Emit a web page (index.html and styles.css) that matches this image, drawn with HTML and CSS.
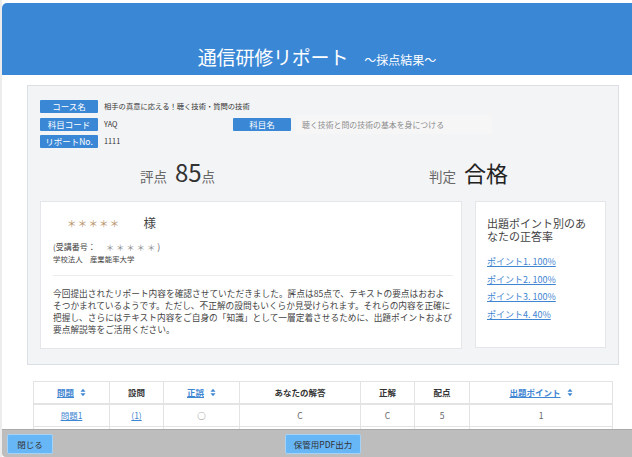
FILE: index.html
```html
<!DOCTYPE html>
<html lang="ja">
<head>
<meta charset="utf-8">
<title>通信研修リポート 採点結果</title>
<link rel="stylesheet" href="styles.css">
</head>
<body>
<div class="page">
  <header class="header">
    <h1 class="title">通信研修リポート<span class="subtitle">～採点結果～</span></h1>
  </header>

  <section class="panel">
    <div class="info">
      <div class="info-row">
        <span class="label">コース名</span>
        <span class="value">相手の真意に応える！聴く技術・質問の技術</span>
      </div>
      <div class="info-row">
        <div class="pair">
          <span class="label">科目コード</span>
          <span class="value">YAQ</span>
        </div>
        <span class="label">科目名</span>
        <span class="value subject-value">聴く技術と問の技術の基本を身につける</span>
      </div>
      <div class="info-row">
        <span class="label">リポートNo.</span>
        <span class="value">1111</span>
      </div>
    </div>

    <div class="scores">
      <div class="score-col score-left">
        <span class="score-label">評点</span>
        <span class="score-num">85</span><span class="score-unit">点</span>
      </div>
      <div class="score-col score-right">
        <span class="score-label">判定</span>
        <span class="score-result">合格</span>
      </div>
    </div>

    <div class="cards">
      <div class="card card-main">
        <div class="name-line"><span class="stars">＊＊＊＊＊</span><span class="sama">様</span></div>
        <div class="number-line"><span>(受講番号：</span><span class="stars-small">＊＊＊＊＊</span><span class="paren">)</span></div>
        <div class="org">学校法人　産業能率大学</div>
        <hr class="divider">
        <p class="comment">今回提出されたリポート内容を確認させていただきました。評点は85点で、テキストの要点はおおよ<br>そつかまれているようです。ただし、不正解の設問もいくらか見受けられます。それらの内容を正確に<br>把握し、さらにはテキスト内容をご自身の「知識」として一層定着させるために、出題ポイントおよび<br>要点解説等をご活用ください。</p>
      </div>
      <div class="card card-side">
        <h2 class="side-title">出題ポイント別のあなたの正答率</h2>
        <ul class="point-list">
          <li><a href="#" class="link">ポイント1. 100%</a></li>
          <li><a href="#" class="link">ポイント2. 100%</a></li>
          <li><a href="#" class="link">ポイント3. 100%</a></li>
          <li><a href="#" class="link">ポイント4. 40%</a></li>
        </ul>
      </div>
    </div>
  </section>

  <table class="results">
    <colgroup>
      <col class="c1"><col class="c2"><col class="c3"><col class="c4"><col class="c5"><col class="c6"><col class="c7">
    </colgroup>
    <thead>
      <tr>
        <th><a href="#" class="link">問題</a><svg class="sort" viewBox="0 0 6 9" width="6" height="9"><polygon points="0.5,3.8 3,0.8 5.5,3.8"/><polygon points="0.5,5.2 3,8.2 5.5,5.2"/></svg></th>
        <th>設問</th>
        <th><a href="#" class="link">正誤</a><svg class="sort" viewBox="0 0 6 9" width="6" height="9"><polygon points="0.5,3.8 3,0.8 5.5,3.8"/><polygon points="0.5,5.2 3,8.2 5.5,5.2"/></svg></th>
        <th>あなたの解答</th>
        <th>正解</th>
        <th>配点</th>
        <th><a href="#" class="link">出題ポイント</a><svg class="sort" viewBox="0 0 6 9" width="6" height="9"><polygon points="0.5,3.8 3,0.8 5.5,3.8"/><polygon points="0.5,5.2 3,8.2 5.5,5.2"/></svg></th>
      </tr>
    </thead>
    <tbody>
      <tr>
        <td><a href="#" class="link">問題1</a></td>
        <td><a href="#" class="link">(1)</a></td>
        <td>○</td>
        <td>C</td>
        <td>C</td>
        <td>5</td>
        <td>1</td>
      </tr>
      <tr>
        <td><a href="#" class="link">問題1</a></td>
        <td><a href="#" class="link">(2)</a></td>
        <td>○</td>
        <td>A</td>
        <td>A</td>
        <td>5</td>
        <td>1</td>
      </tr>
    </tbody>
  </table>
</div>

<footer class="bar">
  <button class="btn">閉じる</button>
  <button class="btn btn-pdf">保管用PDF出力</button>
</footer>
</body>
</html>
```

FILE: styles.css
```css
* { box-sizing: border-box; }

html, body {
  margin: 0;
  padding: 0;
  background: #ffffff;
}

body {
  font-family: "Noto Sans CJK JP", "Noto Sans", sans-serif;
  color: #333;
}

.page {
  border-left: 2px solid #ececec;
  padding-top: 3px;
  padding-bottom: 40px;
  min-height: 457px;
}

.header {
  background: #3a87d6;
  height: 72px;
  border-top-left-radius: 5px;
  padding-top: 42px;
  text-align: center;
}

.title {
  margin: 0;
  font-weight: normal;
  font-size: 19px;
  line-height: 24px;
  color: #ffffff;
  letter-spacing: -0.2px;
}

.subtitle {
  font-size: 12px;
  margin-left: 16px;
  letter-spacing: 0;
}

.panel {
  margin: 10px 13px 0 25px;
  background: #f3f4f6;
  border: 1px solid #dcdfe3;
  padding: 14px 12px 15px 12px;
}

.info {
  display: flex;
  flex-direction: column;
  gap: 4.5px;
}

.info-row {
  display: flex;
  align-items: center;
  height: 13px;
}

.pair {
  display: flex;
  align-items: center;
  width: 193px;
}

.label {
  display: inline-block;
  width: 58px;
  height: 13px;
  line-height: 13px;
  background: #3a87d6;
  color: #ffffff;
  font-size: 8.5px;
  text-align: center;
  border-radius: 1px;
  flex-shrink: 0;
}

.value {
  margin-left: 6px;
  font-size: 7.3px;
  line-height: 13px;
  color: #333;
}

.subject-value {
  margin-left: 5px;
  width: 196px;
  height: 19px;
  line-height: 19px;
  padding-left: 6px;
  background: #f6f6f7;
  color: #8c8c8c;
  font-size: 7.9px;
}

.scores {
  display: flex;
  margin-top: 9px;
  height: 30px;
}

.score-col {
  flex: 1;
  display: flex;
  justify-content: center;
  align-items: baseline;
  height: 30px;
  line-height: 30px;
}

.score-left { padding-right: 10px; }
.score-right { padding-left: 6px; }

.score-label {
  font-size: 13.5px;
  color: #666;
  margin-right: 8px;
}

.score-num {
  font-size: 24px;
  color: #333;
}

.score-unit {
  font-size: 13.5px;
  color: #666;
}

.score-result {
  font-size: 22px;
  color: #222;
}

.cards {
  display: flex;
  align-items: flex-start;
  gap: 13px;
  margin-top: 14px;
}

.card {
  background: #ffffff;
  border: 1px solid #e4e6e9;
}

.card-main {
  flex: 1;
  min-width: 0;
  padding: 12px 8px 12px 12px;
}

.name-line {
  padding-left: 14px;
  height: 18px;
  display: flex;
  align-items: center;
}

.stars {
  font-size: 9.5px;
  line-height: 18px;
  letter-spacing: 1.2px;
  color: #b8946a;
}

.sama {
  margin-left: 23px;
  font-size: 12.5px;
  line-height: 18px;
  color: #444;
}

.number-line {
  margin-top: 9px;
  height: 12px;
  display: flex;
  align-items: center;
  font-size: 8px;
  line-height: 12px;
  color: #444;
}

.stars-small {
  margin-left: 10px;
  font-size: 8.5px;
  line-height: 12px;
  letter-spacing: 1.8px;
  color: #8a8a8a;
}

.paren {
  font-size: 9px;
  line-height: 12px;
  color: #666;
}

.org {
  height: 11px;
  font-size: 7.4px;
  line-height: 11px;
  color: #444;
}

.divider {
  margin: 11px 0 0 0;
  border: 0;
  border-top: 1px solid #ececec;
}

.comment {
  margin: 12px 0 0 0;
  font-size: 8.7px;
  line-height: 12px;
  color: #444;
  white-space: nowrap;
}

.card-side {
  width: 131px;
  flex-shrink: 0;
  padding: 15px 15px 26px 11px;
}

.side-title {
  margin: 0;
  font-weight: normal;
  font-size: 11px;
  line-height: 13px;
  color: #444;
}

.point-list {
  list-style: none;
  margin: 13px 0 0 0;
  padding: 0;
  display: flex;
  flex-direction: column;
  gap: 5.7px;
}

.point-list li {
  font-size: 9px;
  line-height: 12px;
  white-space: nowrap;
}

.link {
  color: #3f86d2;
  text-decoration: underline;
}

.results {
  margin: 16px 0 0 31px;
  width: 579px;
  border-collapse: collapse;
  table-layout: fixed;
  background: #ffffff;
}

.c1 { width: 76px; }
.c2 { width: 54px; }
.c3 { width: 76px; }
.c4 { width: 121px; }
.c5 { width: 54px; }
.c6 { width: 55px; }
.c7 { width: 143px; }

.results th,
.results td {
  border: 1px solid #e3e3e3;
  text-align: center;
  font-size: 8.5px;
  padding: 0;
}

.results th {
  height: 22px;
  font-weight: bold;
  color: #333;
  border-bottom: 2px solid #e3e3e3;
}

.results td {
  height: 23px;
  color: #666;
}

.sort {
  margin-left: 6px;
  vertical-align: -1px;
  fill: #3f86d2;
}

.bar {
  position: fixed;
  left: 2px;
  right: 0;
  bottom: 0;
  height: 28px;
  background: #bdbdbd;
  border-top: 1px solid #aaaaaa;
  border-bottom-left-radius: 4px;
  display: flex;
  align-items: center;
  padding-left: 5px;
}

.btn {
  height: 20px;
  padding: 0;
  background: #67b6f6;
  border: 1px solid #a4d3f7;
  border-radius: 2px;
  font-family: "Noto Sans CJK JP", "Noto Sans", sans-serif;
  font-size: 8.5px;
  color: #333;
  width: 46px;
}

.btn-pdf {
  width: 76px;
  margin-left: 232px;
}
```
